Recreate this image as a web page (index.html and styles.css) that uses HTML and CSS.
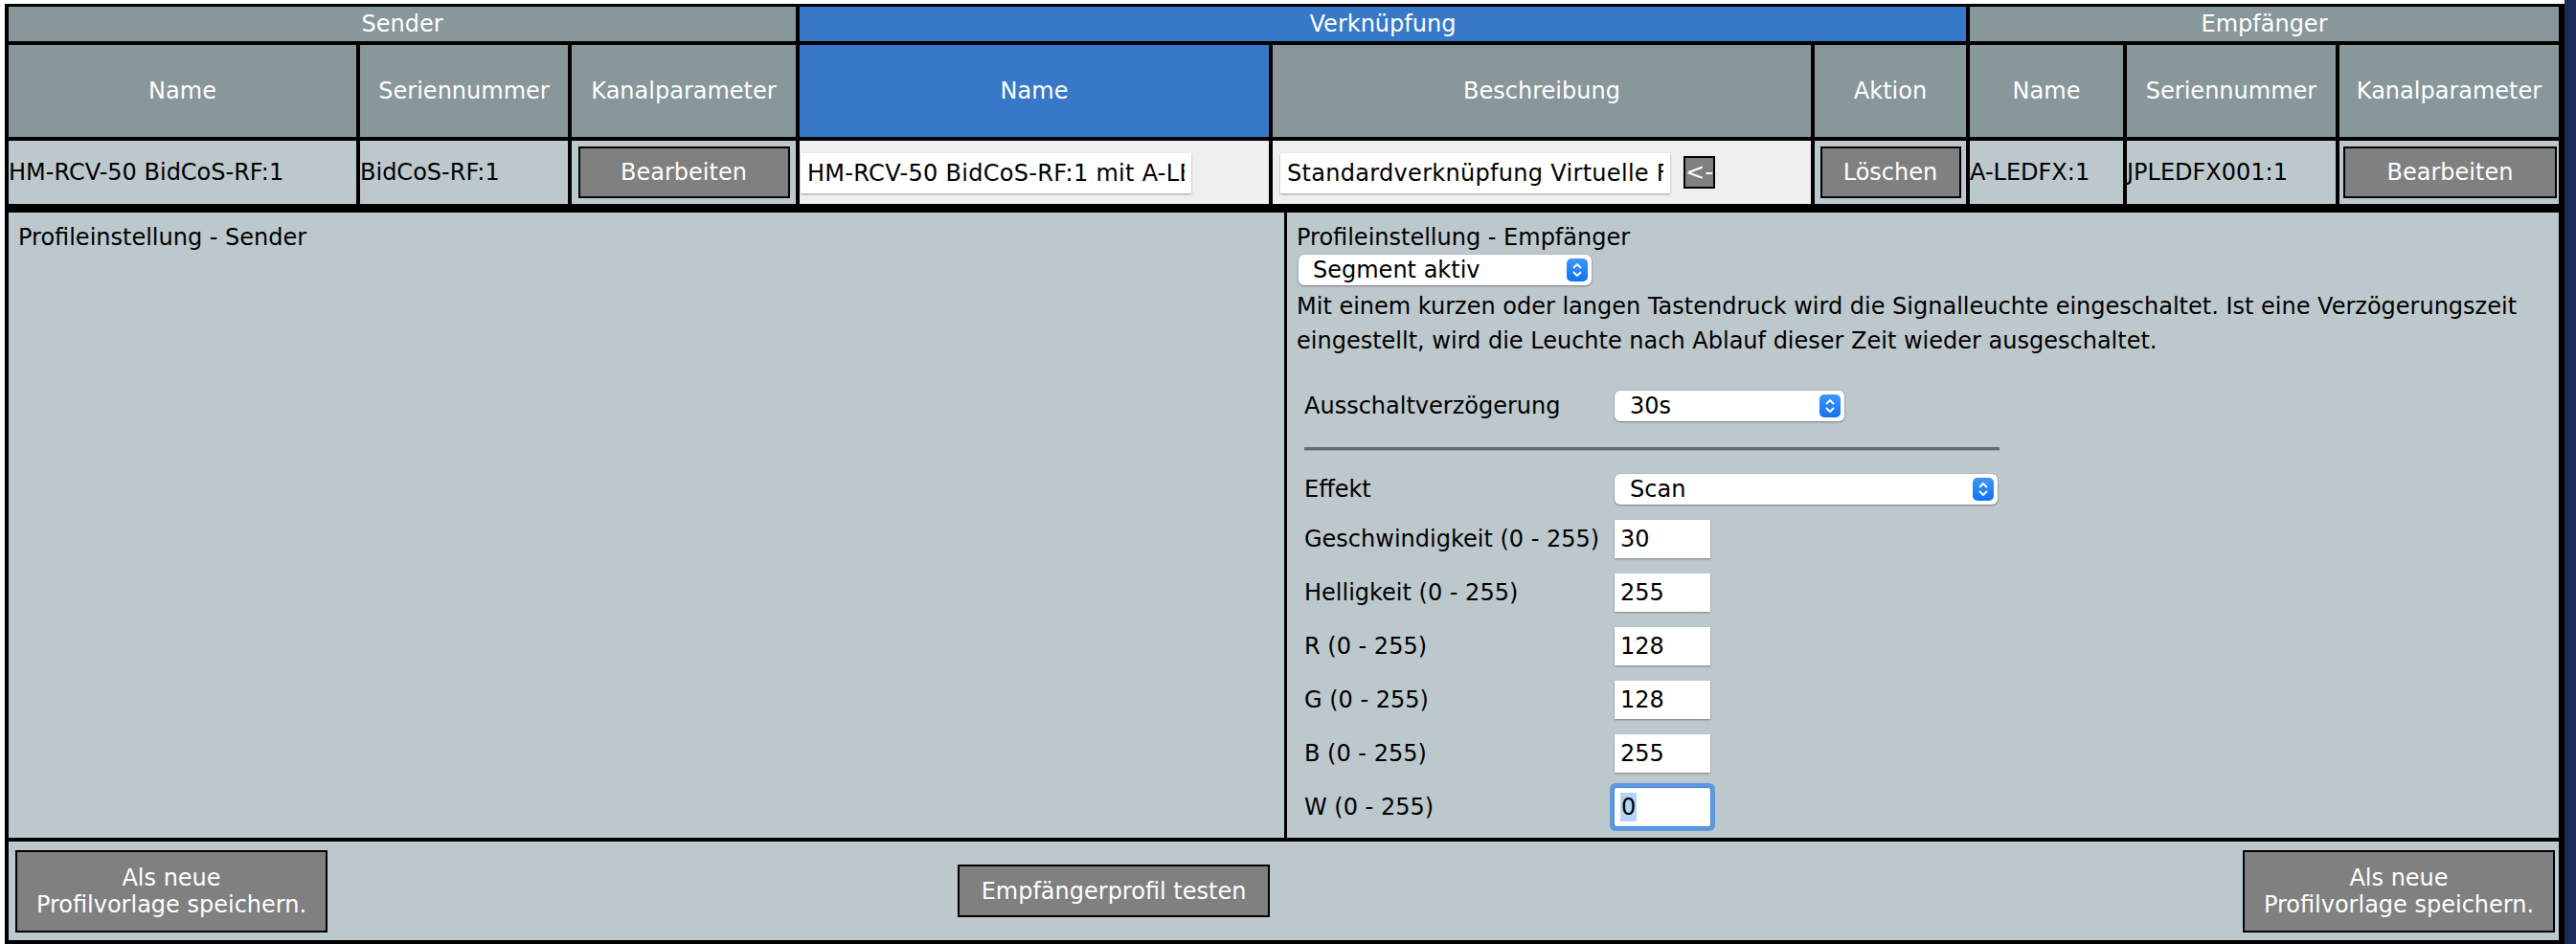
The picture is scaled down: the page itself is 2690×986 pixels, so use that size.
FILE: index.html
```html
<!DOCTYPE html>
<html lang="de">
<head>
<meta charset="utf-8">
<title>Verknüpfung</title>
<link rel="stylesheet" href="styles.css">
</head>
<body>
<div class="page">
  <div class="frame">
    <div class="linktable">
      <div class="hd span3">Sender</div>
      <div class="hd blue span3">Verknüpfung</div>
      <div class="hd span3">Empfänger</div>

      <div class="hd">Name</div>
      <div class="hd">Seriennummer</div>
      <div class="hd">Kanalparameter</div>
      <div class="hd blue">Name</div>
      <div class="hd">Beschreibung</div>
      <div class="hd">Aktion</div>
      <div class="hd">Name</div>
      <div class="hd">Seriennummer</div>
      <div class="hd">Kanalparameter</div>

      <div class="cell">HM-RCV-50 BidCoS-RF:1</div>
      <div class="cell">BidCoS-RF:1</div>
      <div class="cell center"><button class="btn btn-edit">Bearbeiten</button></div>
      <div class="cell light"><input class="txt name-input" value="HM-RCV-50 BidCoS-RF:1 mit A-LEDFX:1"></div>
      <div class="cell light"><input class="txt desc-input" value="Standardverknüpfung Virtuelle Fernbedienung"><button class="btn btn-arrow">&lt;-</button></div>
      <div class="cell center"><button class="btn btn-del">Löschen</button></div>
      <div class="cell">A-LEDFX:1</div>
      <div class="cell">JPLEDFX001:1</div>
      <div class="cell center"><button class="btn btn-edit2">Bearbeiten</button></div>
    </div>

    <div class="panel">
      <div class="pcol left">
        <div class="ptitle">Profileinstellung - Sender</div>
      </div>
      <div class="pcol right">
        <div class="ptitle">Profileinstellung - Empfänger</div>
        <div class="select sel-profile">
          <span>Segment aktiv</span>
          <span class="stepper"><svg width="12" height="18" viewBox="0 0 12 18"><path d="M2.5 6.5 L6 3 L9.5 6.5 M2.5 11.5 L6 15 L9.5 11.5" fill="none" stroke="#fff" stroke-width="1.8" stroke-linecap="round" stroke-linejoin="round"/></svg></span>
        </div>
        <p class="desc">Mit einem kurzen oder langen Tastendruck wird die Signalleuchte eingeschaltet. Ist eine Verzögerungszeit eingestellt, wird die Leuchte nach Ablauf dieser Zeit wieder ausgeschaltet.</p>

        <div class="form">
          <div class="frow first">
            <span class="flabel">Ausschaltverzögerung</span>
            <div class="select sel-delay">
              <span>30s</span>
              <span class="stepper"><svg width="12" height="18" viewBox="0 0 12 18"><path d="M2.5 6.5 L6 3 L9.5 6.5 M2.5 11.5 L6 15 L9.5 11.5" fill="none" stroke="#fff" stroke-width="1.8" stroke-linecap="round" stroke-linejoin="round"/></svg></span>
            </div>
          </div>
          <div class="hr"></div>
          <div class="frow effekt">
            <span class="flabel">Effekt</span>
            <div class="select sel-effekt">
              <span>Scan</span>
              <span class="stepper"><svg width="12" height="18" viewBox="0 0 12 18"><path d="M2.5 6.5 L6 3 L9.5 6.5 M2.5 11.5 L6 15 L9.5 11.5" fill="none" stroke="#fff" stroke-width="1.8" stroke-linecap="round" stroke-linejoin="round"/></svg></span>
            </div>
          </div>
          <div class="frow num first-num">
            <span class="flabel">Geschwindigkeit (0 - 255)</span>
            <input class="field" value="30">
          </div>
          <div class="frow num">
            <span class="flabel">Helligkeit (0 - 255)</span>
            <input class="field" value="255">
          </div>
          <div class="frow num">
            <span class="flabel">R (0 - 255)</span>
            <input class="field" value="128">
          </div>
          <div class="frow num">
            <span class="flabel">G (0 - 255)</span>
            <input class="field" value="128">
          </div>
          <div class="frow num">
            <span class="flabel">B (0 - 255)</span>
            <input class="field" value="255">
          </div>
          <div class="frow num">
            <span class="flabel">W (0 - 255)</span>
            <div class="field focus"><span class="selected">0</span></div>
          </div>
        </div>
      </div>
    </div>

    <div class="footer">
      <button class="btn btn-save">Als neue<br>Profilvorlage speichern.</button>
      <button class="btn btn-test">Empfängerprofil testen</button>
      <button class="btn btn-save right">Als neue<br>Profilvorlage speichern.</button>
    </div>
  </div>
  <div class="strip"></div>
</div>
</body>
</html>
```
FILE: styles.css
```css
* {
  box-sizing: border-box;
}

body {
  margin: 0;
  background: #ffffff;
  font-family: "DejaVu Sans", Verdana, sans-serif;
  font-size: 24px;
  color: #000;
}

.page {
  display: flex;
  height: 986px;
}

.frame {
  width: 2673px;
  margin: 4px 0 0 5px;
  background: #000;
  padding: 3px 6px 4px 4px;
  display: flex;
  flex-direction: column;
}

.strip {
  flex: 1;
  background: #1c2a5c;
}

/* ---------- link table ---------- */
.linktable {
  display: grid;
  grid-template-columns: 363px 217px 234px 490px 562px 158px 160px 218px 229px;
  grid-template-rows: 36px 96px 66px;
  gap: 4px;
}

.hd {
  background: #889799;
  color: #fff;
  display: flex;
  align-items: center;
  justify-content: center;
  white-space: nowrap;
}

.hd.blue {
  background: #3778c8;
}

.span3 {
  grid-column: span 3;
}

.cell {
  background: #bdc8cc;
  display: flex;
  align-items: center;
  white-space: nowrap;
  overflow: hidden;
}

.cell.light {
  background: #efefef;
}

.cell.center {
  justify-content: center;
}

.btn {
  background: #808080;
  color: #fff;
  border: 2px solid #000;
  font: inherit;
  font-size: 24px;
  line-height: 28px;
  padding: 0;
  margin: 0;
  display: flex;
  align-items: center;
  justify-content: center;
  text-align: center;
  border-radius: 0;
}

.btn-edit {
  width: 221px;
  height: 54px;
}

.btn-edit2 {
  width: 223px;
  height: 54px;
  margin-left: 2px;
}

.btn-del {
  width: 147px;
  height: 54px;
}

.btn-arrow {
  width: 33px;
  height: 34px;
  margin-left: 14px;
}

.txt {
  border: none;
  background: #fff;
  height: 42px;
  padding: 0 7px;
  font: inherit;
  letter-spacing: 0.3px;
  color: #000;
  box-shadow: 0 1px 2px rgba(0, 0, 0, 0.35);
  border-radius: 0;
  outline: none;
  margin-top: 2px;
}

.name-input {
  width: 408px;
  margin-left: 1px;
}

.desc-input {
  width: 407px;
  margin-left: 8px;
}

/* ---------- profile panel ---------- */
.panel {
  display: flex;
  gap: 3px;
  margin-top: 9px;
  height: 653px;
}

.pcol {
  background: #bdc8cc;
  padding: 8px 10px 5px;
}

.pcol.left {
  width: 1332px;
}

.pcol.right {
  flex: 1;
}

.ptitle {
  line-height: 36px;
}

.select {
  display: flex;
  align-items: center;
  justify-content: space-between;
  background: #fff;
  border-radius: 6px;
  box-shadow: 0 1px 2px rgba(0, 0, 0, 0.35), 0 0 0 1px rgba(0, 0, 0, 0.06);
  height: 32px;
  padding: 0 4px 0 15px;
  line-height: 28px;
}

.stepper {
  width: 22px;
  height: 24px;
  border-radius: 5px;
  background: linear-gradient(#3d97fb, #1272f0);
  display: flex;
  align-items: center;
  justify-content: center;
}

.sel-profile {
  width: 306px;
  margin: 0 0 0 2px;
}

.desc {
  margin: 4px 0 0 0;
  line-height: 36px;
}

.form {
  margin: 34px 0 0 8px;
}

.frow {
  display: flex;
  align-items: center;
}

.flabel {
  width: 324px;
  line-height: 28px;
  white-space: nowrap;
}

.sel-delay {
  width: 240px;
  padding-left: 16px;
}

.hr {
  width: 726px;
  height: 3px;
  background: #6a6a6a;
  box-shadow: 0 1px 0 #9aa3a6;
  margin-top: 27px;
}

.frow.effekt {
  margin-top: 25px;
}

.sel-effekt {
  width: 400px;
  padding-left: 16px;
}

.frow.num {
  margin-top: 16px;
}

.frow.first-num {
  margin-top: 16px;
}

.field {
  width: 100px;
  height: 40px;
  border: none;
  background: #fff;
  font: inherit;
  color: #000;
  padding: 0 6px;
  box-shadow: 0 1px 2px rgba(0, 0, 0, 0.35);
  border-radius: 0;
  outline: none;
  display: flex;
  align-items: center;
}

.field.focus {
  box-shadow: 0 0 0 1px #4a86d4, 0 0 0 5px #5e99e0;
  border-radius: 2px;
}

.selected {
  background: #b3d4fb;
  line-height: 30px;
  padding: 0 1px;
}

/* ---------- footer ---------- */
.footer {
  margin-top: 4px;
  flex: 1;
  background: #bdc8cc;
  display: flex;
  align-items: center;
  padding: 0 4px 0 7px;
}

.btn-save {
  width: 326px;
  height: 86px;
}

.btn-test {
  width: 326px;
  height: 55px;
  margin-left: 658px;
}

.btn-save.right {
  margin-left: auto;
}
```
